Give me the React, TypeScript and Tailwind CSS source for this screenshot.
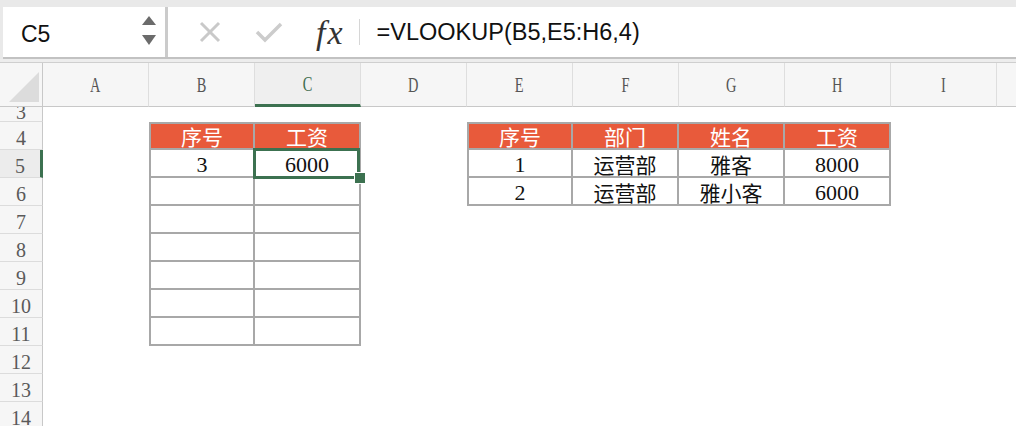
import React from "react";

const COLS = ["A", "B", "C", "D", "E", "F", "G", "H", "I"];

type Tbl = { cols: string[]; rows: number[]; data: string[][] };

const TABLES: Tbl[] = [
  {
    cols: ["B", "C"],
    rows: [4, 5, 6, 7, 8, 9, 10, 11],
    data: [["序号", "工资"], ["3", "6000"]],
  },
  {
    cols: ["E", "F", "G", "H"],
    rows: [4, 5, 6],
    data: [
      ["序号", "部门", "姓名", "工资"],
      ["1", "运营部", "雅客", "8000"],
      ["2", "运营部", "雅小客", "6000"],
    ],
  },
];

function findCell(col: string, row: number) {
  for (const t of TABLES) {
    const ci = t.cols.indexOf(col);
    const ri = t.rows.indexOf(row);
    if (ci >= 0 && ri >= 0) {
      return { ci, ri, text: t.data[ri]?.[ci] ?? "" };
    }
  }
  return null;
}

const isCJK = (s: string) => /[\u4e00-\u9fff]/.test(s);

function Cell({ col, row }: { col: string; row: number }) {
  const c = findCell(col, row);
  const selected = col === "C" && row === 5;
  if (!c) {
    return <div className="w-[106px] h-full shrink-0 bg-white" />;
  }
  const header = c.ri === 0;
  const cls = [
    "w-[106px] h-full shrink-0 relative flex items-center justify-center border-r-2 border-b-2 border-[#a8a8a8]",
    c.ci === 0 ? "border-l-2" : "",
    header ? "border-t-2 bg-[#e85a3b] text-white" : "bg-white text-[#111]",
    selected ? "z-10" : "",
  ].join(" ");
  return (
    <div className={cls}>
      {c.text && (
        <span
          className={
            isCJK(c.text)
              ? "text-[21px] leading-none [font-family:'Noto_Sans_CJK_SC',sans-serif] " + (header ? "" : "pt-[3px]")
              : "text-[22px] leading-none pt-[4px] [font-family:'Liberation_Serif',serif]"
          }
        >
          {c.text}
        </span>
      )}
      {selected && (
        <>
          <div className="absolute z-10 -left-[2px] -top-[2px] -right-[1px] -bottom-[3px] border-[3px] border-[#3c7150] pointer-events-none" />
          <div className="absolute z-20 -right-[7px] -bottom-[8px] w-[12px] h-[12px] bg-[#3c7150] border border-white" />
        </>
      )}
    </div>
  );
}

function RowHeader({ row }: { row: number }) {
  const sel = row === 5;
  return (
    <div
      className={
        "w-[43px] h-full shrink-0 flex items-center justify-center pt-[4px] border-b border-[#dcdcdc] text-[20px] text-[#5a5a5a] [font-family:'Liberation_Serif',serif] " +
        (sel ? "border-r-[3px] border-r-[#3c7150] bg-[#ececec]" : "border-r border-r-[#c8c8c8] bg-[#f6f6f6]")
      }
    >
      {row}
    </div>
  );
}

function SheetRow({ row }: { row: number }) {
  return (
    <div className="flex h-[28px]">
      <RowHeader row={row} />
      {COLS.map((c) => (
        <Cell key={c} col={c} row={row} />
      ))}
      <div className="flex-1 bg-white" />
    </div>
  );
}

export default function App() {
  return (
    <div className="w-[1016px] h-[426px] overflow-hidden bg-white flex flex-col [font-family:'Liberation_Sans',sans-serif]">
      {/* Formula bar */}
      <div className="bg-[#e9e9e9] pt-[7px] pl-[3px] shrink-0">
        <div className="flex h-[52px] bg-white border-b-2 border-[#c2c2c2]">
          <div className="w-[165px] flex items-center justify-between pl-[18px] pr-[8px] border-r-[3px] border-[#cbcbcb]">
            <span className="text-[23px] text-[#111] mt-[4px]">C5</span>
            <svg width="16" height="32" viewBox="0 0 16 32" className="mb-[2px]">
              <polygon points="8,1 15,10 1,10" fill="#6b6b6b" />
              <polygon points="1,20 15,20 8,30" fill="#6b6b6b" />
            </svg>
          </div>
          <div className="flex-1 flex items-center">
            <svg width="22" height="22" viewBox="0 0 22 22" className="ml-[31px]">
              <line x1="2" y1="2" x2="20" y2="20" stroke="#c9c9c9" strokeWidth="3" />
              <line x1="20" y1="2" x2="2" y2="20" stroke="#c9c9c9" strokeWidth="3" />
            </svg>
            <svg width="28" height="22" viewBox="0 0 28 22" className="ml-[34px]">
              <polyline points="2,11 10,19 26,3" fill="none" stroke="#cccccc" strokeWidth="3.5" />
            </svg>
            <span className="ml-[33px] italic text-[34px] leading-none text-[#333] tracking-[2px] [font-family:'Liberation_Serif',serif] mt-[2px]">
              fx
            </span>
            <div className="ml-[14px] w-px h-[26px] bg-[#d6d6d6]" />
            <span className="ml-[17px] text-[23.5px] text-[#111] mt-[2px]">=VLOOKUP(B5,E5:H6,4)</span>
          </div>
        </div>
      </div>
      <div className="h-[3px] bg-[#ededed] shrink-0" />
      {/* Column headers */}
      <div className="flex h-[45px] shrink-0 border-t border-[#cfcfcf] bg-[#f6f6f6]">
        <div className="w-[43px] h-full shrink-0 border-r border-[#c8c8c8] border-b border-b-[#c8c8c8] flex items-end justify-end pr-[3px] pb-[4px]">
          <svg width="30" height="30" viewBox="0 0 30 30">
            <polygon points="30,0 30,30 0,30" fill="#dcdcdc" />
          </svg>
        </div>
        {COLS.map((c) => (
          <div
            key={c}
            className={
              "w-[106px] h-full shrink-0 flex items-center justify-center border-r border-r-[#dedede] text-[20px] [font-family:'Liberation_Serif',serif] " +
              (c === "C"
                ? "border-b-[3px] border-b-[#3c7150] text-[#3c6a4c] bg-[#efefef]"
                : "border-b border-b-[#c8c8c8] text-[#555]")
            }
          >
            <span className="inline-block scale-x-[0.72]">{c}</span>
          </div>
        ))}
        <div className="flex-1 h-full border-b border-b-[#c8c8c8]" />
      </div>
      {/* Partial row 3 */}
      <div className="flex h-[15px] shrink-0 overflow-hidden">
        <div className="w-[43px] h-full shrink-0 border-r border-[#c8c8c8] border-b border-b-[#dcdcdc] bg-[#f6f6f6] relative overflow-hidden">
          <div className="absolute left-0 right-0 bottom-[-5px] h-[28px] flex items-center justify-center text-[20px] text-[#5a5a5a] [font-family:'Liberation_Serif',serif]">
            3
          </div>
        </div>
        <div className="flex-1 bg-white" />
      </div>
      {[4, 5, 6, 7, 8, 9, 10, 11, 12, 13, 14].map((r) => (
        <SheetRow key={r} row={r} />
      ))}
    </div>
  );
}
